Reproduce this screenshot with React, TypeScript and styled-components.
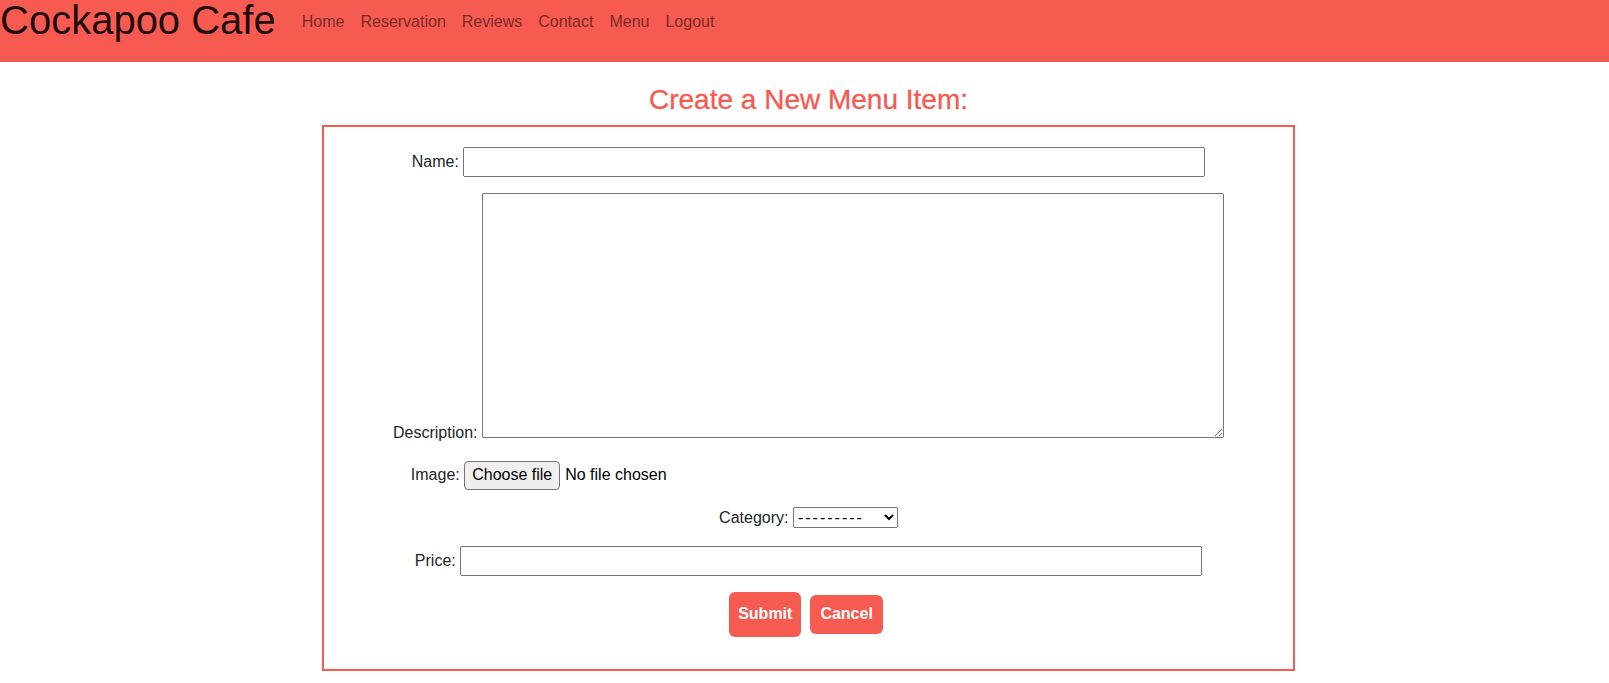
import React from 'react';
import styled, {createGlobalStyle} from 'styled-components';

const GlobalStyle = createGlobalStyle`
  * { box-sizing: border-box; }
  body {
    margin: 0;
    font-family: "Liberation Sans", Arial, sans-serif;
    font-size: 16px;
    line-height: 1.5;
    color: #212529;
    background: #fff;
  }
  input, button, select, textarea {
    margin: 0;
    font-family: inherit;
    font-size: inherit;
    line-height: inherit;
  }
`;

const Navbar = styled.nav`
  display: flex;
  align-items: flex-start;
  height: 62px;
  background: #f75a50;
`;
const Brand = styled.a`
  font-size: 40px;
  line-height: 40px;
  color: rgba(0, 0, 0, .9);
  text-decoration: none;
  margin-right: 18px;
`;
const NavList = styled.ul`
  display: flex;
  list-style: none;
  margin: 0;
  padding: 10px 0 0;
`;
const NavLink = styled.a`
  display: block;
  padding: 0 8px;
  color: rgba(0, 0, 0, .55);
  text-decoration: none;
`;

const Main = styled.main`
  padding-left: 8px;
`;
const Title = styled.h3`
  margin: 21px 0 8px;
  font-size: 28px;
  font-weight: 400;
  line-height: 1.2;
  text-align: center;
  color: #f75a50;
  -webkit-text-stroke: 0.3px #f75a50;
`;
const FormBox = styled.form`
  width: 973px;
  margin: 0 auto;
  border: 2px solid #f75a50;
  padding: 20px 0 32px;
`;
const Row = styled.div<{ $end?: boolean }>`
  display: flex;
  justify-content: center;
  align-items: ${p => p.$end ? 'flex-end' : 'baseline'};
  gap: 4.45px;
  margin-bottom: 16px;
  padding-bottom: ${p => p.$end ? 7 : 0}px;
`;
const Label = styled.label<{ $drop?: boolean }>`
  margin-bottom: ${p => p.$drop ? -7 : 0}px;
`;
const TextInput = styled.input`
  width: 742px;
`;
const TextArea = styled.textarea`
  width: 742px;
  height: 245px;
`;
const FilePicker = styled.div`
  display: flex;
  align-items: baseline;
  gap: 5px;
  width: 742px;
`;
const FileButton = styled.label`
  padding: 1.5px 7px;
  border: 1px solid #767676;
  border-radius: 4px;
  background: #efefef;
  color: #000;
  cursor: pointer;
`;
const FileName = styled.span`
  color: #000;
`;
const HiddenFile = styled.input`
  display: none;
`;
const Select = styled.select`
  width: 105px;
  letter-spacing: 2px;
  color: #000;
`;
const Buttons = styled.div`
  display: flex;
  justify-content: center;
  align-items: center;
  gap: 9px;
  padding-right: 5px;
`;
const ActionButton = styled.button<{ $tall?: boolean }>`
  border: 0;
  border-radius: 6px;
  background: #f75a50;
  color: #fff;
  font-weight: 600;
  padding: ${p => p.$tall ? '10.5px 9px' : '7.5px 10px'};
  cursor: pointer;
`;

const links = ['Home', 'Reservation', 'Reviews', 'Contact', 'Menu', 'Logout'];

export default function App() {
  return (
    <>
      <GlobalStyle/>
      <Navbar>
        <Brand href="#">Cockapoo Cafe</Brand>
        <NavList>
          {links.map(l => <li key={l}><NavLink href="#">{l}</NavLink></li>)}
        </NavList>
      </Navbar>
      <Main>
        <Title>Create a New Menu Item:</Title>
        <FormBox onSubmit={e => e.preventDefault()}>
          <Row>
            <Label htmlFor="name">Name:</Label>
            <TextInput id="name" type="text"/>
          </Row>
          <Row $end>
            <Label htmlFor="desc" $drop>Description:</Label>
            <TextArea id="desc"/>
          </Row>
          <Row>
            <Label htmlFor="img">Image:</Label>
            <FilePicker>
              <FileButton htmlFor="img">Choose file</FileButton>
              <FileName>No file chosen</FileName>
              <HiddenFile id="img" type="file"/>
            </FilePicker>
          </Row>
          <Row>
            <Label htmlFor="cat">Category:</Label>
            <Select id="cat" defaultValue="">
              <option value="">---------</option>
            </Select>
          </Row>
          <Row>
            <Label htmlFor="price">Price:</Label>
            <TextInput id="price" type="text"/>
          </Row>
          <Buttons>
            <ActionButton type="submit" $tall>Submit</ActionButton>
            <ActionButton type="button">Cancel</ActionButton>
          </Buttons>
        </FormBox>
      </Main>
    </>
  );
}
